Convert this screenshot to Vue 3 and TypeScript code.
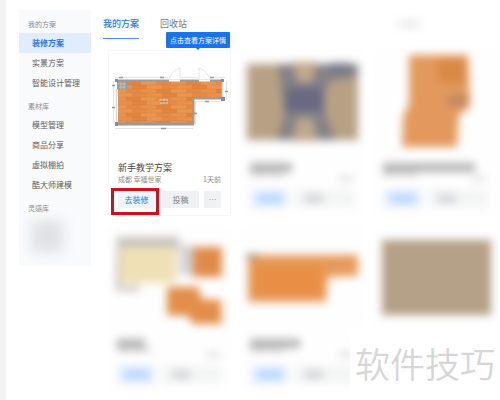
<script setup lang="ts">
interface Section {
  title: string
  items: string[]
}

interface Shape {
  points: string
  fill: string
}

interface HiddenPlan {
  id: number
  titleWidth: number
  shapes: Shape[]
}

const sections: Section[] = [
  { title: '我的方案', items: ['装修方案', '实景方案', '智能设计管理'] },
  { title: '素材库', items: ['模型管理', '商品分享', '虚拟棚拍', '酷大师建模'] },
  { title: '灵感库', items: [] },
]
const active = '装修方案'

// Floor boards: x, y, width, tint
const boards: [number, number, number, string][] = []
for (let row = 0; row < 11; row++) {
  for (let col = 0; col < 8; col++) {
    const x = 2 + col * 15 + (row % 2) * 6
    const tint = ['#e8914c', '#e08440', '#ea9653', '#e38a46'][(row * 3 + col * 5 + (row % 2)) % 4]
    boards.push([x, 30 + row * 4, 15, tint])
  }
}

const hiddenPlans: HiddenPlan[] = [
  {
    id: 2, titleWidth: 42,
    shapes: [
      { points: '5,13 116,13 116,89 5,89', fill: '#b6a184' },
      { points: '36,13 116,13 116,25 88,30 80,44 84,66 94,89 35,89 42,66 40,44', fill: '#858187' },
      { points: '44,37 82,37 82,60 44,60', fill: '#686983' },
      { points: '88,12 108,12 108,22 88,22', fill: '#77778a' },
      { points: '50,11 75,11 70,31 56,31', fill: '#c3a98a' },
      { points: '55,67 71,67 76,90 50,90', fill: '#bda88b' },
    ],
  },
  {
    id: 3, titleWidth: 92,
    shapes: [
      { points: '34,4 93,4 95,56 84,64 82,96 27,96 28,66 34,52', fill: '#e3995e' },
      { points: '62,8 92,8 92,32 64,32', fill: '#d98946' },
      { points: '72,44 95,44 93,54 74,56', fill: '#bd8a60' },
    ],
  },
  {
    id: 4, titleWidth: 28,
    shapes: [
      { points: '8,10 70,10 70,22 12,22 12,60 30,58 30,64 7,64', fill: '#c5c2bc' },
      { points: '11,20 67,20 67,56 11,56', fill: '#efe0b6' },
      { points: '70,18 84,18 84,48 70,48', fill: '#d3d5d5' },
      { points: '84,20 113,20 113,50 84,50', fill: '#df8a48' },
      { points: '58,60 90,60 92,72 112,73 113,97 83,97 80,89 58,88', fill: '#e28e49' },
    ],
  },
  {
    id: 5, titleWidth: 50,
    shapes: [
      { points: '6,28 116,28 116,49 86,50 84,75 6,75', fill: '#e69a5b' },
      { points: '12,38 80,38 80,68 12,68', fill: '#e98f45' },
      { points: '4,27 16,27 16,31 4,31', fill: '#a09080' },
    ],
  },
  {
    id: 6, titleWidth: 40,
    shapes: [{ points: '7,13 116,13 116,88 7,88', fill: '#b4a187' }],
  },
]
</script>

<template>
  <div class="page">
    <nav class="sidebar">
      <section v-for="s in sections" :key="s.title" class="group">
        <h2>{{ s.title }}</h2>
        <a v-for="item in s.items" :key="item" href="#" :class="{ active: item === active }">{{ item }}</a>
      </section>
      <div class="veil"></div>
    </nav>

    <main>
      <header class="tabs">
        <a href="#" class="tab current">我的方案</a>
        <a href="#" class="tab">回收站</a>
        <span class="search-haze"></span>
      </header>

      <div class="grid">
        <article class="card">
          <div class="tip">点击查看方案详情</div>
          <svg class="plan" viewBox="0 0 121 104">
            <defs>
              <clipPath id="floor">
                <path d="M9 30H113V47H84V72H9Z" />
              </clipPath>
            </defs>
            <g clip-path="url(#floor)">
              <rect x="8" y="29" width="106" height="44" fill="#e58a42" />
              <rect v-for="(b, i) in boards" :key="i" :x="b[0]" :y="b[1]" :width="b[2]" height="4" :fill="b[3]" />
              <path v-for="n in 10" :key="n" :d="`M9 ${30 + n * 4}H113`" stroke="#c96f30" stroke-opacity="0.350" stroke-width="0.500" />
            </g>
            <path d="M6 29.500H115M84 47.500H116M84.500 47V73" fill="none" stroke="#9b9b9b" stroke-width="2" />
            <path d="M6 73H85" stroke="#999" stroke-width="3" />
            <path d="M7.500 38V71M113.500 31V46" stroke="#d5dadd" stroke-width="1.500" />
            <path d="M6 28h3v3h-3zM6 71h3v4h-3zM112 28h3v3h-3zM112 46h4v4h-4z" fill="#8b8b8b" />
            <rect x="8" y="31" width="10" height="7" fill="#999d9c" />
            <path d="M9 33h8M10 36h7M12 31v7M15 31v7" stroke="#c4bcb2" />
            <path d="M60 29.500H71M90 29.500H101" stroke="#fff" stroke-width="2" />
            <path d="M71 29V17Q62 20 60 29M90 29V17Q99 20 101 29" fill="none" stroke="#e2e4e6" />
            <path d="M6 26.500h53M72 26.500h17M102 26.500h14M4.500 30V73M6 77.500H84M86.500 50V74M86 50.500H114M117.500 30V48" fill="none" stroke="#c9c9c9" stroke-width="0.500" />
            <path d="M10 26.500h4M51 26.500h4M101 26.500h4M3 56.500h3M3 34.500h3M52 77.500h5M85 62.500h3M96 50.500h4M116 40.500h3" stroke="#999" stroke-width="1.500" />
            <path d="M50 49h9M51 52h8M52 48v5M55 47v6M58 48v5" stroke="#d3c4ac" />
            <path d="M51 50.500h7" stroke="#8e7e6d" stroke-width="0.700" />
          </svg>
          <div class="info">
            <h3>新手教学方案</h3>
            <p><span>成都 幸福世家</span><span>1天前</span></p>
            <div class="actions">
              <button class="primary" type="button">去装修</button>
              <button type="button">投稿</button>
              <button class="more" type="button">···</button>
            </div>
          </div>
          <div class="marker"></div>
        </article>

        <article v-for="plan in hiddenPlans" :key="plan.id" class="card hazy">
          <svg class="whole" viewBox="0 0 121 163">
            <defs>
              <filter :id="`image-haze-${plan.id}`" x="-30%" y="-30%" width="160%" height="160%" color-interpolation-filters="sRGB">
                <feGaussianBlur stdDeviation="4" />
              </filter>
              <filter :id="`text-haze-${plan.id}`" x="-30%" y="-60%" width="160%" height="220%" color-interpolation-filters="sRGB">
                <feGaussianBlur stdDeviation="4" />
              </filter>
            </defs>
            <g :filter="`url(#image-haze-${plan.id})`">
              <polygon v-for="(s, i) in plan.shapes" :key="i" :points="s.points" :fill="s.fill" />
            </g>
            <g :filter="`url(#text-haze-${plan.id})`">
              <rect x="8" y="112" :width="plan.titleWidth" height="9" fill="#b4b4b4" />
              <rect x="8" y="121" width="34" height="4" fill="#d4d4d4" />
              <rect x="97" y="125" width="14" height="5" fill="#e0e0e0" />
              <rect x="9" y="139" width="37" height="17" fill="#e2eefe" />
              <rect x="16" y="142" width="24" height="11" fill="#bdd8ff" />
              <rect x="53" y="139" width="59" height="17" fill="#f3f4f4" />
              <rect x="63" y="143" width="18" height="9" fill="#d4d6d8" />
            </g>
          </svg>
        </article>
      </div>
    </main>

    <div class="watermark">软件技巧</div>
  </div>
</template>

<style>
body {
  background: #fff;
}
</style>

<style scoped>
.page {
  position: relative;
  display: flex;
  gap: 12px;
  box-sizing: border-box;
  min-height: 100vh;
  padding: 10px 4px 11px 13px;
  border-left: 6px solid #f4f4f4;
  overflow: hidden;
  font-family: "Noto Sans CJK SC", sans-serif;
  color: #5c5c5c;
}

a {
  color: inherit;
  text-decoration: none;
}

h2,
h3,
p {
  margin: 0;
  font-weight: 400;
}

.sidebar {
  display: flex;
  flex: 0 0 72px;
  flex-direction: column;
  align-self: flex-start;
  gap: 4px;
  box-sizing: border-box;
  padding: 5px 0 14px;
  background: #f8fafc;
}

.group h2 {
  padding-left: 9px;
  font-size: 7px;
  line-height: 18px;
  color: #8c8c8c;
}

.group a {
  display: block;
  padding-left: 13px;
  font-size: 8px;
  line-height: 20px;
  white-space: nowrap;
}

.group a.active {
  background: #e1edfd;
  color: #2878e6;
  font-weight: 700;
}

.veil {
  height: 31px;
  margin: 0 28px 0 13px;
  background: #dfe1e3;
  filter: blur(6px);
}

main {
  flex: 1;
  min-width: 0;
}

.tabs {
  display: flex;
  gap: 21px;
  height: 29px;
  margin-bottom: 12px;
}

.tab {
  font-size: 9px;
  line-height: 28px;
  color: #777;
}

.tab.current {
  border-bottom: 1px solid #4b91ee;
  color: #2878e6;
  font-weight: 500;
}

.search-haze {
  width: 22px;
  height: 6px;
  margin: 11px 75px 0 auto;
  background: #e6e6e6;
  filter: blur(5px);
}

.grid {
  display: grid;
  grid-template-columns: repeat(3, 1fr);
  gap: 12px;
  padding-left: 6px;
}

.card {
  position: relative;
  box-sizing: border-box;
  min-width: 0;
  background: #fff;
  box-shadow: 0 0 0 1px #f6f7f8;
}

.card.hazy {
  background: #fefefe;
  box-shadow: 0 0 6px #fcfcfc;
}

.plan,
.whole {
  display: block;
  width: 100%;
  overflow: visible;
}

.info {
  padding: 6px 9px 7px;
}

h3 {
  font-size: 9px;
  line-height: 13px;
  color: #444;
}

p {
  display: flex;
  justify-content: space-between;
  font-size: 7px;
  line-height: 11px;
  color: #8c8c8c;
}

.actions {
  display: flex;
  gap: 5px;
  margin-top: 6px;
}

button {
  flex: 37;
  height: 17px;
  padding: 0;
  border: 0;
  border-radius: 1px;
  background: #eff1f3;
  color: #808080;
  font-family: inherit;
  font-size: 8px;
  line-height: 17px;
}

button.primary {
  margin-right: 2px;
  background: #edf5ff;
  color: #2878e6;
}

button.more {
  flex: 17;
  font-family: "Liberation Sans", sans-serif;
}

.tip {
  position: absolute;
  top: -19px;
  right: 0;
  padding: 0 4px;
  border-radius: 1px;
  background: #1973ec;
  color: #fff;
  font-size: 7px;
  line-height: 16px;
  white-space: nowrap;
}

.tip::after {
  content: "";
  position: absolute;
  top: 16px;
  left: 50%;
  margin-left: -2px;
  border: 2px solid transparent;
  border-top-color: #1973ec;
}

.marker {
  position: absolute;
  top: 137px;
  left: 2px;
  box-sizing: border-box;
  width: 48px;
  height: 27px;
  border: 3px solid #d0101c;
  pointer-events: none;
}

.watermark {
  position: absolute;
  right: 0;
  bottom: 0;
  box-sizing: border-box;
  width: 150px;
  height: 74px;
  padding-left: 5px;
  background: #fff;
  color: #d6d6d6;
  font-size: 35px;
  font-weight: 350;
  line-height: 72px;
  white-space: nowrap;
}
</style>
